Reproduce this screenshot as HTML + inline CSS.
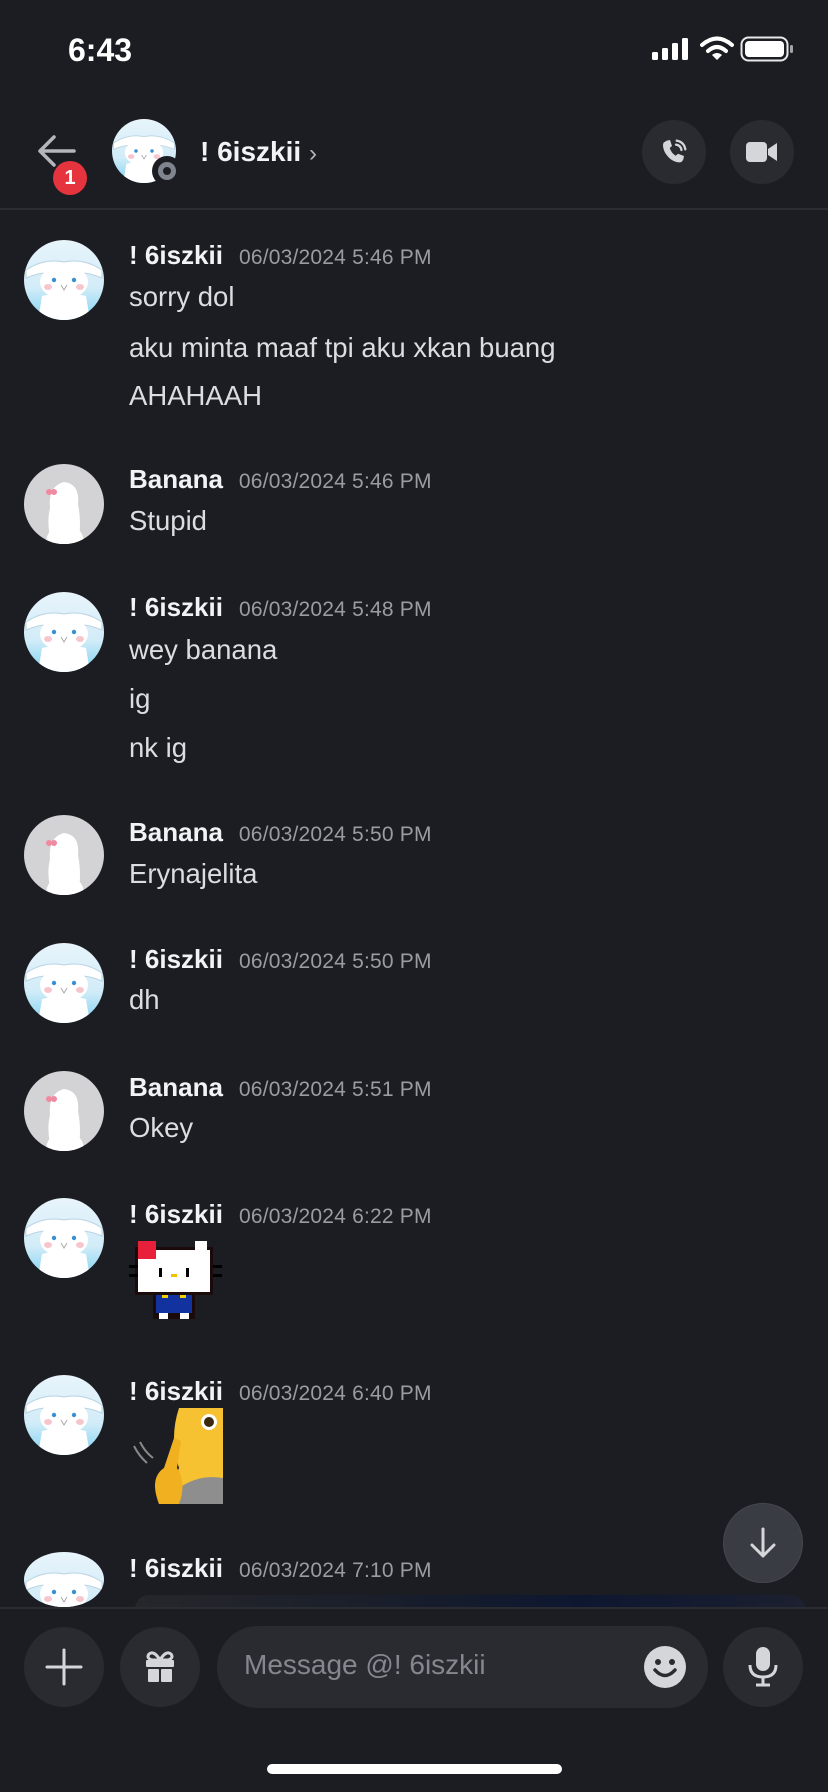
<!DOCTYPE html>
<html><head><meta charset="utf-8"><style>
*{margin:0;padding:0;box-sizing:border-box}
body{width:828px;height:1792px;background:#1c1d22;font-family:"Liberation Sans",sans-serif;color:#dcdde1;position:relative;overflow:hidden}
.abs{position:absolute}
.name{position:absolute;left:129px;font-size:26px;font-weight:bold;color:#f2f3f5;white-space:nowrap}
.name span{font-weight:normal;font-size:21px;color:#9b9ca3;margin-left:16px;letter-spacing:0.2px}
.txt{position:absolute;left:129px;font-size:27.5px;color:#dcdde1;white-space:nowrap}
.av{position:absolute;left:24px;width:80px;height:80px;border-radius:50%;overflow:hidden}
.btn{position:absolute;border-radius:50%;background:#2a2b31}
</style></head><body>
<svg width="0" height="0" style="position:absolute"><defs>
<linearGradient id="cg" x1="0" y1="0" x2="0" y2="1"><stop offset="0" stop-color="#e8f4fb"/><stop offset="0.6" stop-color="#d2ecf8"/><stop offset="1" stop-color="#7fd3f2"/></linearGradient>
<symbol id="cin" viewBox="0 0 80 80"><rect width="80" height="80" fill="url(#cg)"/><path d="M2 30 Q20 18 40 22 Q60 18 78 30 L78 38 Q60 30 40 34 Q20 30 2 38Z" fill="#fff" stroke="#b9d3e3" stroke-width="1"/><ellipse cx="40" cy="42" rx="24" ry="17" fill="#fff"/><path d="M18 56 Q40 50 62 56 L66 80 L14 80Z" fill="#fff"/><circle cx="30" cy="40" r="2.2" fill="#3b8fd0"/><circle cx="50" cy="40" r="2.2" fill="#3b8fd0"/><ellipse cx="24" cy="47" rx="4" ry="3" fill="#f6c6cc"/><ellipse cx="56" cy="47" rx="4" ry="3" fill="#f6c6cc"/><path d="M37 45 L40 50 L43 45" fill="none" stroke="#aaa" stroke-width="1"/></symbol>
<symbol id="ban" viewBox="0 0 80 80"><rect width="80" height="80" fill="#d3d3d5"/><path d="M28 80 Q22 60 26 44 Q24 22 40 18 Q56 20 54 40 Q58 60 54 80Z" fill="#fff"/><path d="M22 80 Q22 66 34 62 L48 62 Q60 66 60 80Z" fill="#fff"/><circle cx="25" cy="28" r="3" fill="#f08aa0"/><circle cx="30" cy="28" r="3" fill="#f08aa0"/></symbol>
</defs></svg>

<!-- status bar -->
<div class="abs" style="left:68px;top:32px;font-size:32px;font-weight:bold;color:#fff">6:43</div>
<svg class="abs" style="left:652px;top:38px" width="40" height="24"><rect x="0" y="14" width="6" height="8" rx="1.5" fill="#fff"/><rect x="10" y="10" width="6" height="12" rx="1.5" fill="#fff"/><rect x="20" y="5" width="6" height="17" rx="1.5" fill="#fff"/><rect x="30" y="0" width="6" height="22" rx="1.5" fill="#fff"/></svg>
<svg class="abs" style="left:700px;top:36px" width="34" height="26" viewBox="0 0 34 26"><path d="M2 9 Q17 -4 32 9" stroke="#fff" stroke-width="4" fill="none" stroke-linecap="round"/><path d="M8 15 Q17 7 26 15" stroke="#fff" stroke-width="4" fill="none" stroke-linecap="round"/><path d="M12 19 L17 24 L22 19 Q17 15 12 19Z" fill="#fff"/></svg>
<svg class="abs" style="left:740px;top:36px" width="54" height="26"><rect x="1.5" y="1.5" width="46" height="23" rx="7" fill="none" stroke="#fff" stroke-width="2" opacity="0.9"/><rect x="5" y="5" width="39" height="16" rx="4" fill="#fff"/><rect x="50" y="9" width="3" height="8" rx="1.5" fill="#fff" opacity="0.6"/></svg>

<!-- header -->
<svg class="abs" style="left:36px;top:134px" width="40" height="34" viewBox="0 0 40 34"><path d="M18 3 L4 17 L18 31 M4 17 L38 17" stroke="#b5b6bb" stroke-width="3.5" fill="none" stroke-linecap="round" stroke-linejoin="round"/></svg>
<div class="abs" style="left:53px;top:161px;width:34px;height:34px;border-radius:50%;background:#e5343d;color:#fff;font-weight:bold;font-size:20px;text-align:center;line-height:34px">1</div>
<div class="abs" style="left:112px;top:119px;width:64px;height:64px;border-radius:50%;overflow:hidden"><svg width="64" height="64"><use href="#cin" width="64" height="64"/></svg></div>
<div class="abs" style="left:152px;top:156px;width:30px;height:30px;border-radius:50%;background:#1c1d22"></div>
<div class="abs" style="left:158px;top:162px;width:18px;height:18px;border-radius:50%;border:5px solid #80848e"></div>
<div class="abs" style="left:200px;top:136px;font-size:28px;font-weight:bold;color:#f2f3f5">! 6iszkii <span style="font-weight:normal;font-size:24px;color:#b5b6bb">›</span></div>
<div class="btn" style="left:642px;top:120px;width:64px;height:64px"></div>
<svg class="abs" style="left:658px;top:136px" width="32" height="32" viewBox="0 0 24 24"><path d="M6.6 3.5 L9 3 L10.5 7.5 L8.8 9 Q9.8 12.5 13.2 14.8 L15 13.3 L19.5 15 L19 17.5 Q18 20 15.5 19.8 Q9 19 5 12 Q3 7.5 4.2 5 Z" fill="#d5d6da"/><path d="M14 3.5 Q19.5 4.5 20.5 10 M13.5 6.5 Q17 7 17.6 10.5" stroke="#d5d6da" stroke-width="1.7" fill="none" stroke-linecap="round"/></svg>
<div class="btn" style="left:730px;top:120px;width:64px;height:64px"></div>
<svg class="abs" style="left:745px;top:137px" width="34" height="30" viewBox="0 0 34 30"><rect x="1" y="5" width="21" height="20" rx="4" fill="#d5d6da"/><path d="M23 12 L32 6 L32 24 L23 18Z" fill="#d5d6da"/></svg>
<div class="abs" style="left:0;top:208px;width:828px;height:2px;background:#2b2c32"></div>

<!-- messages -->
<svg class="av" style="top:240px"><use href="#cin" width="80" height="80"/></svg>
<div class="name" style="top:240px">! 6iszkii<span>06/03/2024 5:46 PM</span></div>
<div class="txt" style="top:281px">sorry dol</div>
<div class="txt" style="top:332px">aku minta maaf tpi aku xkan buang</div>
<div class="txt" style="top:380px">AHAHAAH</div>

<svg class="av" style="top:464px"><use href="#ban" width="80" height="80"/></svg>
<div class="name" style="top:464px">Banana<span>06/03/2024 5:46 PM</span></div>
<div class="txt" style="top:505px">Stupid</div>

<svg class="av" style="top:592px"><use href="#cin" width="80" height="80"/></svg>
<div class="name" style="top:592px">! 6iszkii<span>06/03/2024 5:48 PM</span></div>
<div class="txt" style="top:634px">wey banana</div>
<div class="txt" style="top:683px">ig</div>
<div class="txt" style="top:732px">nk ig</div>

<svg class="av" style="top:815px"><use href="#ban" width="80" height="80"/></svg>
<div class="name" style="top:817px">Banana<span>06/03/2024 5:50 PM</span></div>
<div class="txt" style="top:858px">Erynajelita</div>

<svg class="av" style="top:943px"><use href="#cin" width="80" height="80"/></svg>
<div class="name" style="top:944px">! 6iszkii<span>06/03/2024 5:50 PM</span></div>
<div class="txt" style="top:984px">dh</div>

<svg class="av" style="top:1071px"><use href="#ban" width="80" height="80"/></svg>
<div class="name" style="top:1072px">Banana<span>06/03/2024 5:51 PM</span></div>
<div class="txt" style="top:1112px">Okey</div>

<svg class="av" style="top:1198px"><use href="#cin" width="80" height="80"/></svg>
<div class="name" style="top:1199px">! 6iszkii<span>06/03/2024 6:22 PM</span></div>
<svg class="abs" style="left:129px;top:1238px" width="96" height="90" viewBox="0 0 32 30" shape-rendering="crispEdges">
<rect x="2" y="3" width="26" height="16" fill="#1a0a0a"/><rect x="3" y="4" width="24" height="14" fill="#fff"/><rect x="3" y="1" width="6" height="6" fill="#e8203a"/><rect x="22" y="1" width="4" height="4" fill="#fff"/><rect x="0" y="9" width="3" height="1" fill="#000"/><rect x="0" y="12" width="3" height="1" fill="#000"/><rect x="28" y="9" width="3" height="1" fill="#000"/><rect x="28" y="12" width="3" height="1" fill="#000"/><rect x="10" y="10" width="1" height="3" fill="#000"/><rect x="19" y="10" width="1" height="3" fill="#000"/><rect x="14" y="12" width="2" height="1" fill="#f5c000"/><rect x="8" y="19" width="14" height="8" fill="#1a0a0a"/><rect x="9" y="19" width="12" height="6" fill="#1232a0"/><rect x="11" y="19" width="2" height="1" fill="#f5d000"/><rect x="17" y="19" width="2" height="1" fill="#f5d000"/><rect x="10" y="25" width="3" height="2" fill="#fff"/><rect x="17" y="25" width="3" height="2" fill="#fff"/></svg>

<svg class="av" style="top:1375px"><use href="#cin" width="80" height="80"/></svg>
<div class="name" style="top:1376px">! 6iszkii<span>06/03/2024 6:40 PM</span></div>
<svg class="abs" style="left:129px;top:1408px" width="94" height="96" viewBox="0 0 94 96"><path d="M50 0 L94 0 L94 96 L55 96 Q40 80 50 60 Q40 30 50 0Z" fill="#f7c232"/><path d="M50 80 Q70 66 94 70 L94 96 L40 96Z" fill="#8e8e8e"/><circle cx="80" cy="14" r="8" fill="#fff"/><circle cx="80" cy="14" r="5" fill="#3b2a0e"/><path d="M30 96 Q20 70 35 60 L45 30 L52 33 L48 60 Q58 75 50 96Z" fill="#f0b020"/><path d="M5 38 Q10 48 18 55 M11 34 Q16 44 24 50" stroke="#888" stroke-width="2" fill="none"/></svg>

<svg class="av" style="top:1552px;height:55px"><use href="#cin" width="80" height="80"/></svg>
<div class="name" style="top:1553px">! 6iszkii<span>06/03/2024 7:10 PM</span></div>
<div class="abs" style="left:135px;top:1595px;width:670px;height:14px;border-radius:14px 14px 0 0;background:linear-gradient(90deg,#26272b,#1a1f2a,#0d1730,#1c2030)"></div>

<div class="btn" style="left:723px;top:1503px;width:80px;height:80px;background:#3a3c43;border:1px solid #45474e"></div>
<svg class="abs" style="left:745px;top:1525px" width="36" height="36" viewBox="0 0 36 36"><path d="M18 4 L18 31 M7 20 L18 31 L29 20" stroke="#d5d6da" stroke-width="3" fill="none" stroke-linecap="round" stroke-linejoin="round"/></svg>

<!-- bottom bar -->
<div class="abs" style="left:0;top:1607px;width:828px;height:185px;background:#1c1d22;border-top:2px solid #2b2c32"></div>
<div class="btn" style="left:24px;top:1627px;width:80px;height:80px"></div>
<svg class="abs" style="left:44px;top:1647px" width="40" height="40"><path d="M20 3 L20 37 M3 20 L37 20" stroke="#d5d6da" stroke-width="3" stroke-linecap="round"/></svg>
<div class="btn" style="left:120px;top:1627px;width:80px;height:80px"></div>
<svg class="abs" style="left:140px;top:1647px" width="40" height="40" viewBox="0 0 40 40"><path d="M20 13 Q14 3 9 7 Q6 11 12 13Z M20 13 Q26 3 31 7 Q34 11 28 13Z" fill="none" stroke="#d5d6da" stroke-width="3"/><rect x="6" y="13" width="28" height="7" rx="1" fill="#d5d6da"/><rect x="8" y="22" width="11" height="13" rx="1" fill="#d5d6da"/><rect x="21" y="22" width="11" height="13" rx="1" fill="#d5d6da"/></svg>
<div class="abs" style="left:217px;top:1626px;width:491px;height:82px;border-radius:41px;background:#2a2b31"></div>
<div class="abs" style="left:244px;top:1649px;font-size:28px;color:#85878f">Message @! 6iszkii</div>
<svg class="abs" style="left:643px;top:1645px" width="44" height="44" viewBox="0 0 44 44"><circle cx="22" cy="22" r="21" fill="#d5d6da"/><circle cx="15" cy="17" r="3" fill="#2a2b31"/><circle cx="29" cy="17" r="3" fill="#2a2b31"/><path d="M12 25 Q22 36 32 25" stroke="#2a2b31" stroke-width="3.5" fill="none" stroke-linecap="round"/></svg>
<div class="btn" style="left:723px;top:1627px;width:80px;height:80px"></div>
<svg class="abs" style="left:743px;top:1645px" width="40" height="44" viewBox="0 0 40 44"><rect x="13" y="2" width="14" height="24" rx="7" fill="#d5d6da"/><path d="M7 20 Q7 32 20 32 Q33 32 33 20" stroke="#d5d6da" stroke-width="3" fill="none"/><path d="M20 32 L20 40 M13 40 L27 40" stroke="#d5d6da" stroke-width="3"/></svg>
<div class="abs" style="left:267px;top:1764px;width:295px;height:10px;border-radius:5px;background:#fff"></div>
</body></html>
